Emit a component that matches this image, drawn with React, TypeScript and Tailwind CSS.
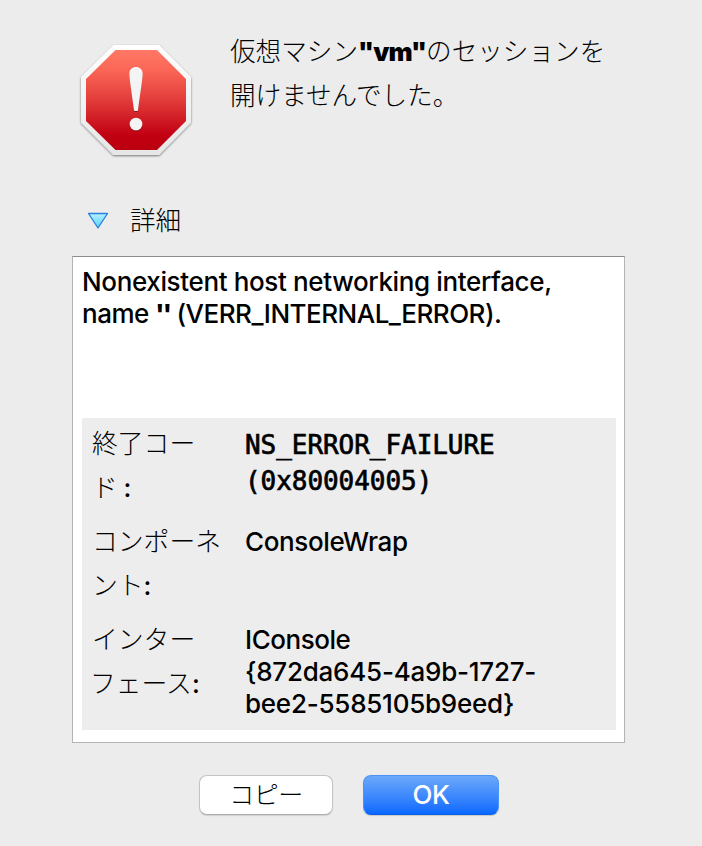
import type { ReactNode } from "react";

interface IDetailRowProps {
  label: ReactNode;
  children: ReactNode;
}

function ErrorIcon() {
  return (
    <svg width="120" height="124" viewBox="0 0 120 124" className="shrink-0">
      <defs>
        <linearGradient id="stop-red" x1="0" y1="0" x2="0" y2="1">
          <stop offset="0" stopColor="#ff7865" />
          <stop offset="0.2" stopColor="#fb6656" />
          <stop offset="0.5" stopColor="#e23d3b" />
          <stop offset="0.85" stopColor="#c10012" />
          <stop offset="1" stopColor="#bb0010" />
        </linearGradient>
        <linearGradient id="stop-rim" x1="0" y1="0" x2="0" y2="1">
          <stop offset="0" stopColor="#ffffff" />
          <stop offset="1" stopColor="#e6e6e6" />
        </linearGradient>
        <filter id="rim-shadow" x="-10%" y="-10%" width="120%" height="120%">
          <feDropShadow dx="0" dy="1" stdDeviation="1.3" floodOpacity="0.5" />
        </filter>
        <filter id="mark-shadow" x="-30%" y="-10%" width="160%" height="120%">
          <feDropShadow dx="0" dy="1" stdDeviation="0.7" floodOpacity="0.4" />
        </filter>
      </defs>
      <path
        d="M37.5 5H83L115 37V82.5L83 115H37.5L5 82.5V37Z"
        fill="url(#stop-rim)"
        filter="url(#rim-shadow)"
      />
      <path
        d="M39.5 10H81L110 39V81L81 110H39.5L10 81V39Z"
        fill="url(#stop-red)"
      />
      <g fill="#f4f4f4" filter="url(#mark-shadow)">
        <path d="M53.4 33.5C53.4 29.5 56.3 27 60 27S66.6 29.5 66.6 33.5C66.6 40 63.5 57 62 70Q62 71 61 71H59Q58 71 58 70C56.5 57 53.4 40 53.4 33.5Z" />
        <circle cx="60" cy="84" r="6.3" />
      </g>
    </svg>
  );
}

function DetailRow({ label, children }: Readonly<IDetailRowProps>) {
  return (
    <div className="flex h-[98px]">
      <dt className="w-[163px] shrink-0 whitespace-nowrap pl-[10px] pt-[2px] font-['Noto_Sans_CJK_JP',sans-serif] text-[25.8px] font-light leading-[44px]">
        {label}
      </dt>
      <dd className="whitespace-nowrap pt-[10px] leading-[32px]">{children}</dd>
    </div>
  );
}

function Colon() {
  return (
    <span className="font-['Inter',sans-serif] font-medium leading-none">
      :
    </span>
  );
}

export default function App() {
  return (
    <main className="h-[846px] w-[702px] bg-[#ececec] pt-[28px] font-['Inter','Noto_Sans_CJK_JP',sans-serif] text-[26px] font-medium text-black">
      <header className="flex h-[170px] pl-[76px]">
        <div className="pt-[12px]">
          <ErrorIcon />
        </div>
        <h1 className="whitespace-nowrap pl-[34px] font-['Noto_Sans_CJK_JP',sans-serif] text-[25.6px] font-light leading-[44px]">
          仮想マシン
          <b className="font-['Inter',sans-serif] font-black leading-none tracking-[-0.8px]">
            "vm"
          </b>
          のセッションを
          <br />
          開けませんでした。
        </h1>
      </header>

      <div className="flex h-[58px] items-start pl-[87px]">
        <svg width="22" height="18" viewBox="0 0 22 18" className="mt-[14px]">
          <defs>
            <linearGradient id="arrow" x1="0" y1="0" x2="0" y2="1">
              <stop offset="0" stopColor="#b5f2ff" />
              <stop offset="1" stopColor="#55d2fb" />
            </linearGradient>
          </defs>
          <path
            d="M1.5 1.5H20.5L11 16Z"
            fill="url(#arrow)"
            stroke="#2a7de1"
            strokeWidth="1.3"
            strokeLinejoin="round"
          />
        </svg>
        <span className="-mt-px pl-[21px] font-['Noto_Sans_CJK_JP',sans-serif] text-[25.6px] font-light leading-[44px]">
          詳細
        </span>
      </div>

      <section className="mx-[72px] h-[487px] w-[553px] border border-[#b4b4b4] border-t-[#8c8c8c] bg-white px-[9px] pt-[9px]">
        <p className="h-[152px] whitespace-nowrap leading-[32px] tracking-[-0.36px]">
          Nonexistent host networking interface,
          <br />
          <span className="tracking-[-0.5px]">
            name{" "}
            <span className="font-extrabold tracking-[-1.8px]">''</span>{" "}
            (VERR_INTERNAL_ERROR).
          </span>
        </p>
        <dl className="h-[312px] w-[534px] bg-[#ededed]">
          <DetailRow
            label={
              <>
                終了コー
                <br />ド <Colon />
              </>
            }
          >
            <div className="-mt-px font-['DejaVu_Sans_Mono',monospace] leading-[36px] tracking-[-0.05px] [-webkit-text-stroke:0.7px_black]">
              NS_ERROR_FAILURE
              <br />
              (0x80004005)
            </div>
          </DetailRow>
          <DetailRow
            label={
              <>
                コンポーネ
                <br />
                ント
                <Colon />
              </>
            }
          >
            <div className="tracking-[-0.36px]">ConsoleWrap</div>
          </DetailRow>
          <DetailRow
            label={
              <>
                インター
                <br />
                <span className="-ml-[2px]">フェース</span>
                <Colon />
              </>
            }
          >
            <div className="tracking-[-0.24px]">
              <span className="tracking-[-0.45px]">IConsole</span>
              <br />
              {"{872da645-4a9b-1727-"}
              <br />
              {"bee2-5585105b9eed}"}
            </div>
          </DetailRow>
        </dl>
      </section>

      <footer className="flex gap-[30px] pl-[199px] pt-[32px]">
        <button className="h-[40px] w-[134px] rounded-[8px] border border-[#c4c4c4] border-b-[#aeaeae] bg-white pb-1 font-['Noto_Sans_CJK_JP',sans-serif] text-[25px] font-light leading-[34px] tracking-[-0.5px] shadow-[0_1px_1px_rgba(0,0,0,0.12)]">
          コピー
        </button>
        <button className="h-[40px] w-[136px] rounded-[8px] border border-[#4a94f5] border-b-[#0a5fe8] bg-linear-to-b from-[#6ca8f9] to-[#0468ff] leading-[38px] tracking-[-0.4px] text-white shadow-[0_1px_1px_rgba(0,0,0,0.15)]">
          OK
        </button>
      </footer>
    </main>
  );
}
